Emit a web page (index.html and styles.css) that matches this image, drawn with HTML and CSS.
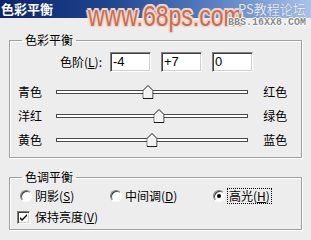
FILE: index.html
```html
<!DOCTYPE html>
<html>
<head>
<meta charset="utf-8">
<link rel="stylesheet" href="styles.css">
</head>
<body>
<div class="window">
  <div class="titlebar"><span class="title">色彩平衡</span></div>
  <div class="watermark">
    <span class="wm-url">www.68ps.com</span>
    <span class="wm-forum">PS教程论坛</span>
    <span class="wm-bbs">BBS.16XX8.COM</span>
  </div>
  <div class="content">
    <fieldset class="group g1">
      <legend>色彩平衡</legend>
      <div class="levels">
        <span class="levels-label">色阶(<u>L</u>):</span>
        <div class="fields">
          <span class="field">-4</span>
          <span class="field">+7</span>
          <span class="field">0</span>
        </div>
      </div>
      <div class="sliders">
        <div class="srow">
          <span class="lab">青色</span>
          <div class="track"><span class="thumb" style="left:48%"><svg width="11" height="14" viewBox="0 0 11 14"><polygon points="5.5,0.5 10.5,5.5 10.5,13.5 0.5,13.5 0.5,5.5" fill="#f2f2f2" stroke="#1a1a1a"/><polyline points="1.5,12.5 1.5,6 5.5,2" fill="none" stroke="#fff"/></svg></span></div>
          <span class="lab right">红色</span>
        </div>
        <div class="srow">
          <span class="lab">洋红</span>
          <div class="track"><span class="thumb" style="left:53.5%"><svg width="11" height="14" viewBox="0 0 11 14"><polygon points="5.5,0.5 10.5,5.5 10.5,13.5 0.5,13.5 0.5,5.5" fill="#f2f2f2" stroke="#1a1a1a"/><polyline points="1.5,12.5 1.5,6 5.5,2" fill="none" stroke="#fff"/></svg></span></div>
          <span class="lab right">绿色</span>
        </div>
        <div class="srow">
          <span class="lab">黄色</span>
          <div class="track"><span class="thumb" style="left:50%"><svg width="11" height="14" viewBox="0 0 11 14"><polygon points="5.5,0.5 10.5,5.5 10.5,13.5 0.5,13.5 0.5,5.5" fill="#f2f2f2" stroke="#1a1a1a"/><polyline points="1.5,12.5 1.5,6 5.5,2" fill="none" stroke="#fff"/></svg></span></div>
          <span class="lab right">蓝色</span>
        </div>
      </div>
    </fieldset>
    <fieldset class="group g2">
      <legend>色调平衡</legend>
      <div class="radios">
        <div class="opt"><span class="radio"></span><span>阴影(<u>S</u>)</span></div>
        <div class="opt"><span class="radio"></span><span>中间调(<u>D</u>)</span></div>
        <div class="opt"><span class="radio checked"></span><span class="focus">高光(<u>H</u>)</span></div>
      </div>
      <div class="checkrow">
        <span class="check"><svg width="9" height="9" viewBox="0 0 9 9"><path d="M1 4 L3 6 L8 1 L8 3 L3 8 L1 6 Z" fill="#000"/></svg></span>
        <span>保持亮度(<u>V</u>)</span>
      </div>
    </fieldset>
  </div>
</div>
</body>
</html>
```

FILE: styles.css
```css
html, body {
  margin: 0;
  padding: 0;
}
body {
  background: #ededed;
  font-family: "Noto Sans CJK SC", sans-serif;
  font-size: 12px;
  line-height: 14px;
  color: #000;
  width: 311px;
  height: 240px;
  overflow: hidden;
}
.window {
  position: relative;
  width: 311px;
  height: 240px;
}
.titlebar {
  height: 18px;
  background: linear-gradient(to right, #0a246a 0%, #1f4590 35%, #5a82c4 70%, #a6c4ec 100%);
  display: flex;
  align-items: center;
  padding-left: 1px;
}
.title {
  color: #fff;
  font-weight: bold;
  font-size: 13px;
  line-height: 16px;
}
.watermark {
  position: absolute;
  left: 0;
  top: 0;
  width: 311px;
  height: 30px;
  pointer-events: none;
}
.wm-url {
  position: absolute;
  left: 88px;
  top: -2px;
  font-family: "Liberation Sans", sans-serif;
  font-size: 23px;
  line-height: 28px;
  color: #c0705a;
  transform: scaleY(1.25);
  transform-origin: left top;
  text-shadow: 1px 0 0 #f4d2c2, -1px 0 0 #f4d2c2, 0 1px 0 #f4d2c2, 0 -1px 0 #f4d2c2, 1px 1px 0 #f4d2c2, -1px -1px 0 #f4d2c2, 1px -1px 0 #f4d2c2, -1px 1px 0 #f4d2c2, 2px 0 1px #f8e4d8, -2px 0 1px #f8e4d8;
}
.wm-forum {
  position: absolute;
  left: 238px;
  top: 1px;
  font-size: 13px;
  line-height: 15px;
  color: #e6e9f2;
  text-shadow: 0 0 1px #6a7aa0;
}
.wm-bbs {
  position: absolute;
  left: 228px;
  top: 17px;
  font-family: "Liberation Mono", monospace;
  font-size: 10px;
  line-height: 12px;
  font-weight: bold;
  color: #8a8a8a;
  text-shadow: 1px 0 0 #fff, -1px 0 0 #fff, 0 1px 0 #fff, 0 -1px 0 #fff;
}
.content {
  padding: 15px 9px 0 9px;
}
.group {
  margin: 0;
  padding: 0 0 5px 0;
  border: 1px solid #a0a0a0;
  box-shadow: 1px 1px 0 #fff, inset 1px 1px 0 #fff;
  min-width: 0;
}
.group legend {
  margin-left: 12px;
  padding: 0 3px;
  line-height: 14px;
}
.levels {
  display: flex;
  align-items: center;
  margin: 5px 0 0 50px;
}
.levels-label {
  width: 50px;
}
.fields {
  display: flex;
  gap: 10px;
}
.field {
  box-sizing: border-box;
  width: 41px;
  height: 20px;
  background: #fff;
  border: 1px solid;
  border-color: #808080 #fff #fff #808080;
  box-shadow: inset 1px 1px 0 #404040, inset -1px -1px 0 #d4d0c8;
  font-family: "Liberation Sans", sans-serif;
  font-size: 13px;
  line-height: 18px;
  padding-left: 2px;
}
.sliders {
  margin-top: 8px;
}
.srow {
  display: flex;
  align-items: center;
  height: 24px;
  padding-left: 8px;
}
.lab {
  width: 39px;
}
.lab.right {
  margin-left: 15px;
}
.track {
  position: relative;
  box-sizing: border-box;
  width: 198px;
  height: 4px;
  background: #fff;
  border: 1px solid #4a4a4a;
}
.thumb {
  position: absolute;
  top: -6px;
  width: 11px;
  height: 14px;
  transform: translateX(-50%);
}
.thumb svg {
  display: block;
}
.g2 {
  margin-top: 12px;
  padding-bottom: 1px;
}
.radios {
  display: grid;
  grid-template-columns: 90px 103px auto;
  align-items: center;
  height: 20px;
  margin-top: 2px;
  padding-left: 10px;
}
.opt {
  display: flex;
  align-items: center;
  gap: 3px;
}
.radio {
  box-sizing: border-box;
  width: 12px;
  height: 12px;
  border-radius: 50%;
  background: #fff;
  border: 1px solid;
  border-color: #808080 #fff #fff #808080;
  box-shadow: inset 1px 1px 0 #404040;
  display: flex;
  align-items: center;
  justify-content: center;
}
.radio.checked::after {
  content: "";
  width: 4px;
  height: 4px;
  border-radius: 50%;
  background: #000;
}
.focus {
  outline: 1px dotted #000;
  padding: 0 1px;
}
.checkrow {
  display: flex;
  align-items: center;
  gap: 5px;
  height: 22px;
  padding-left: 7px;
}
.check {
  box-sizing: border-box;
  width: 13px;
  height: 13px;
  background: #fff;
  border: 1px solid;
  border-color: #808080 #fff #fff #808080;
  box-shadow: inset 1px 1px 0 #404040, inset -1px -1px 0 #d4d0c8;
  display: flex;
  align-items: center;
  justify-content: center;
}
.check svg {
  display: block;
}
```
